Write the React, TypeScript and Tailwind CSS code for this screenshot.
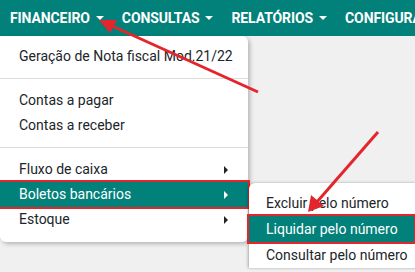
const teal = "bg-[#02807a]";

const Caret = () => (
  <span className="ml-[6px] inline-block h-0 w-0 border-x-[4px] border-t-[4px] border-x-transparent border-t-white" />
);

const NavItem = ({ label }: { label: string }) => (
  <div className="flex items-center pr-[18px] whitespace-nowrap">
    <span className="text-[14px] font-bold text-white tracking-[-0.1px]">{label}</span>
    <Caret />
  </div>
);

const Arrow = () => (
  <span className="ml-auto inline-block h-0 w-0 border-y-[4px] border-l-[4px] border-y-transparent border-l-current" />
);

const Item = ({ label, sub, active }: { label: string; sub?: boolean; active?: boolean }) => (
  <div
    className={
      active
        ? `flex h-[25px] items-center whitespace-nowrap pl-[19px] pr-[20px] text-white ${teal} outline-2 outline-[#e3262b]`
        : "flex h-[25px] items-center whitespace-nowrap pl-[19px] pr-[20px] text-[#212529]"
    }
  >
    <span>{label}</span>
    {sub && <Arrow />}
  </div>
);

const Divider = () => <div className="my-[9px] h-px bg-[#dcdcdc]" />;

export default function App() {
  return (
    <div className="h-[272px] w-[415px] overflow-hidden bg-[#f0f0f0] font-['Roboto',sans-serif]">
      <nav className={`flex h-9 items-center overflow-hidden pl-[10px] ${teal}`}>
        <NavItem label="FINANCEIRO" />
        <NavItem label="CONSULTAS" />
        <NavItem label="RELATÓRIOS" />
        <NavItem label="CONFIGURAÇÕES" />
      </nav>

      <div className="relative h-[236px]">
        <div className="absolute left-0 top-0 w-[248px] rounded-b-md rounded-tr-md bg-white pt-2 pb-[10px] text-[14px] shadow-[2px_2px_4px_rgba(0,0,0,0.25)]">
          <Item label="Geração de Nota fiscal Mod.21/22" />
          <Divider />
          <Item label="Contas a pagar" />
          <Item label="Contas a receber" />
          <Divider />
          <Item label="Fluxo de caixa" sub />
          <Item label="Boletos bancários" sub active />
          <Item label="Estoque" sub />
        </div>

        <div className="absolute left-[249px] top-[147px] w-[200px] rounded-tl-md bg-white pt-[7px] text-[14px] shadow-[-1px_0_3px_rgba(0,0,0,0.3)]">
          <div className="flex h-[26px] items-center pl-[17px] text-[#212529]">Excluir pelo número</div>
          <div className={`flex h-[26px] w-[165px] items-center pl-[17px] text-white ${teal} outline-2 outline-[#e3262b]`}>
            Liquidar pelo número
          </div>
          <div className="flex h-[26px] items-center pl-[17px] text-[#212529]">Consultar pelo número</div>
        </div>
      </div>

      <svg className="pointer-events-none absolute left-0 top-0" width="415" height="272">
        <g stroke="#e3262b" strokeWidth="3" fill="#e3262b">
          <line x1="258" y1="92" x2="110" y2="25" />
          <polygon points="99,20 117,20 110,33" stroke="none" />
          <line x1="378" y1="132" x2="316" y2="203" />
          <polygon points="308,212 311,195 324,206" stroke="none" />
        </g>
      </svg>
    </div>
  );
}
